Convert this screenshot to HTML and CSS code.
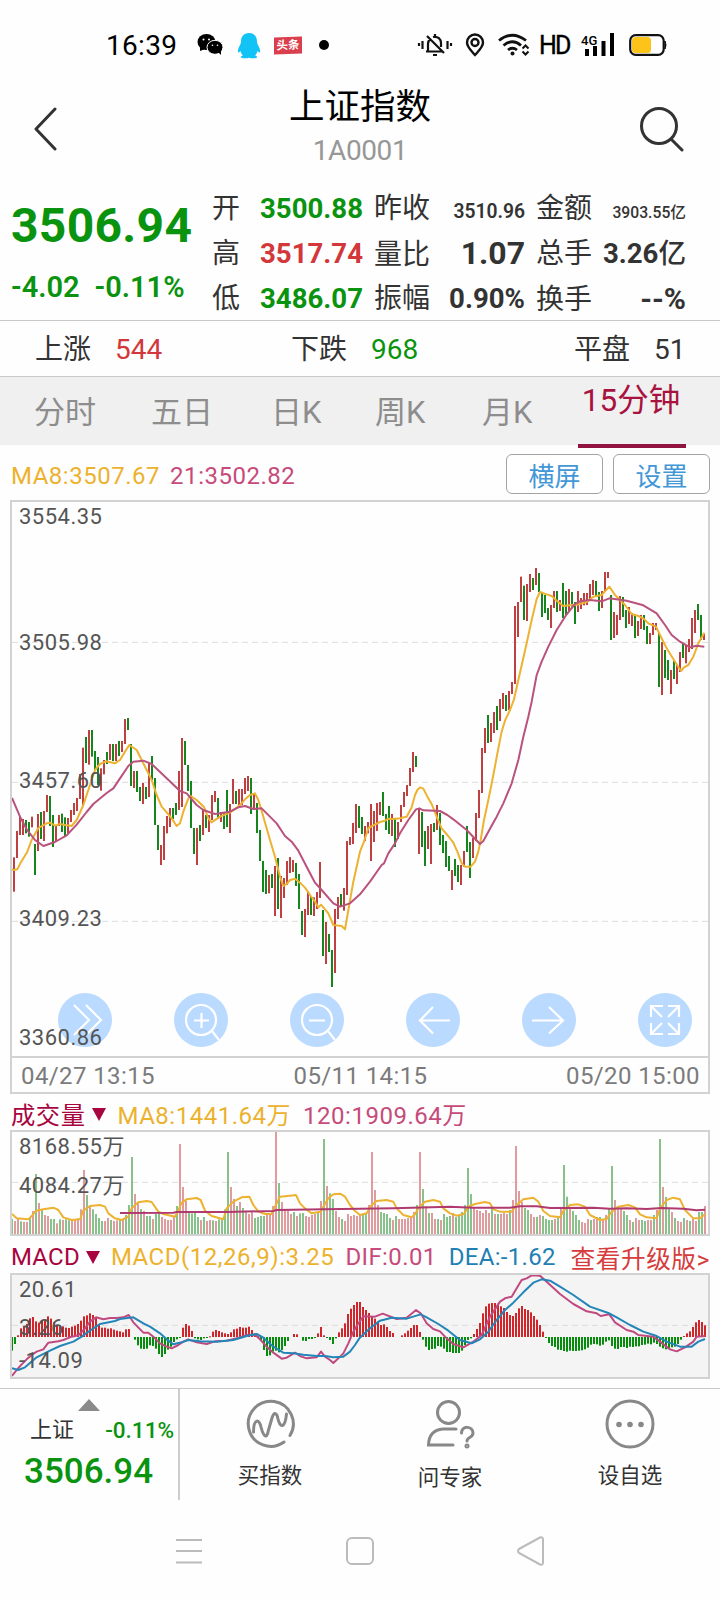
FILE: index.html
```html
<!DOCTYPE html>
<html lang="zh-CN">
<head>
<meta charset="utf-8">
<title>上证指数</title>
<link rel="stylesheet" href="styles.css">
</head>
<body>
<div class="statusbar">
  <span class="clock">16:39</span>
  <svg class="ic-wechat" width="26" height="22" viewBox="0 0 26 22"><ellipse cx="9.5" cy="8" rx="9" ry="8"/><path d="M3 13v4l5-2z"/><g stroke="#fff"><ellipse cx="18" cy="13.3" rx="8" ry="7"/></g><path d="M21 18l3 3v-4z"/><g fill="#fff"><circle cx="6.5" cy="5.5" r="1"/><circle cx="12" cy="5.5" r="1"/><circle cx="15.5" cy="11.3" r=".8"/><circle cx="20.5" cy="11.3" r=".8"/></g></svg>
  <svg class="ic-qq" width="24" height="27" viewBox="0 0 24 27"><path d="M12 1c-5 0-8 3.500-8 8.500 0 2-1 3.500-2 5.500S.5 20 1.300 20.500s2-1.500 2.200-1.500c.5 2 1.500 3.500 2.500 4.500-1.500.5-2.500 1-2 2 .5 1 6 1 8 .2 2 .8 7.500.8 8-.2.500-1-.500-1.500-2-2 1-1 2-2.500 2.500-4.500.2 0 1.400 2 2.200 1.500s.300-3.500-.7-5.500-2-3.500-2-5.500C20 4.500 17 1 12 1z" fill="#12c3f6"/></svg>
  <span class="toutiao">头条</span>
  <span class="dot"></span>
  <div class="sysicons">
    <svg width="36" height="24" viewBox="0 0 36 24" fill="none" stroke="#111" stroke-width="2.200"><path d="M9 18.500h16M11 18V11c0-2 1-4 2.500-5M16 4c5-1 8 2 8 6v4M10 3l17 17M18 1v3M16 22h4M2 10v3M5.500 8v8M30.500 8v8M34 10v3"/></svg>
    <svg class="ic-pin" width="20" height="24" viewBox="0 0 20 24" fill="none" stroke="#111" stroke-width="2.400"><path d="M10 22C6 17.500 2 14 2 9.500a8 8 0 0 1 16 0C18 14 14 17.500 10 22z"/><circle cx="10" cy="9.500" r="3.500"/></svg>
    <svg class="ic-wifi" width="32" height="24" viewBox="0 0 32 24" fill="none" stroke="#111" stroke-width="2.800"><path d="M1 7.500Q14-3 28 7.500M5.500 12.500Q14.500 5 23 12.500M10 17q4.500-3.500 9 0"/><circle cx="14.500" cy="20.500" r="2" fill="#111" stroke="none"/><path d="M24.500 15.500l3-3 3 3M24.500 18.500l3 3 3-3" stroke-width="2"/></svg>
    <span class="hd">HD</span>
    <svg class="ic-signal" width="34" height="24" viewBox="0 0 34 24"><path d="M4 16h4v7H4zM12 13h4v10h-4zM20.500 8h4v15h-4zM29 0h4v23h-4z"/><text x="0" y="12" class="net">4G</text></svg>
    <svg class="ic-batt" width="38" height="22" viewBox="0 0 38 22"><rect x="1.200" y="1.200" width="33.500" height="19.600" rx="5.500" fill="#fff" stroke="#111" stroke-width="2.200"/><rect x="3" y="3" width="19" height="16" rx="3.500" fill="#fcc419"/><path d="M36 7q2 4 0 8z" stroke="#111"/></svg>
  </div>
</div>

<header class="header">
  <svg class="back" width="24" height="44" viewBox="0 0 24 44" fill="none" stroke="#333" stroke-width="3" stroke-linecap="round" stroke-linejoin="round"><path d="M21 2L2 22l19 20"/></svg>
  <div class="titles"><h1>上证指数</h1><p>1A0001</p></div>
  <svg class="search" width="46" height="46" viewBox="0 0 46 46" fill="none" stroke="#333" stroke-width="3" stroke-linecap="round"><circle cx="20" cy="20" r="17.500"/><path d="M32 33l11 11"/></svg>
</header>

<section class="quote">
  <div class="last"><strong class="price">3506.94</strong><div class="chg"><b>-4.02</b><b>-0.11%</b></div></div>
  <dl class="stats">
    <div><dt>开</dt><dd class="g">3500.88</dd></div><div><dt>昨收</dt><dd class="s20">3510.96</dd></div><div><dt>金额</dt><dd class="s16">3903.55亿</dd></div>
    <div><dt>高</dt><dd class="r">3517.74</dd></div><div><dt>量比</dt><dd class="s32">1.07</dd></div><div><dt>总手</dt><dd>3.26<span>亿</span></dd></div>
    <div><dt>低</dt><dd class="g">3486.07</dd></div><div><dt>振幅</dt><dd>0.90%</dd></div><div><dt>换手</dt><dd class="s29">--%</dd></div>
  </dl>
</section>
<section class="breadth">
  <div>上涨<span class="r">544</span></div><div>下跌<span class="g">968</span></div><div>平盘<span>51</span></div>
</section>
<nav class="tabs"><a>分时</a><a>五日</a><a>日K</a><a>周K</a><a>月K</a><a class="on">15分钟</a></nav>

<div class="legend main-legend"><span class="y">MA8:3507.67</span><span class="p">21:3502.82</span><button>横屏</button><button>设置</button></div>

<section class="kbox">
  <div class="plot">
    <svg class="canvas" id="kline" viewBox="36 1506 2088 1662"></svg>
    <div class="tools">
      <svg viewBox="0 0 54 54"><path d="M16 12l15 15-15 15M28 12l15 15-15 15"/></svg>
      <svg viewBox="0 0 54 54"><circle cx="27" cy="27" r="15"/><path d="M38 38l7 9M20 27.500h15M27.500 20v15"/></svg>
      <svg viewBox="0 0 54 54"><circle cx="27" cy="27" r="15"/><path d="M38 38l7 9M19 27.500h16"/></svg>
      <svg viewBox="0 0 54 54"><path d="M27 14L14 27.500l13 13M14 27.500h30"/></svg>
      <svg viewBox="0 0 54 54"><path d="M27 14l14 13.500-14 13M41 27.500H10"/></svg>
      <svg viewBox="0 0 54 54"><path d="M13 24V13h12M13 13l11 11M30 13h11v11M41 13L30 24M13 30v11h12M13 41l11-11M41 30v11H30M41 41L30 30"/></svg>
    </div>
    <span class="lb k1">3554.35</span><span class="lb k2">3505.98</span><span class="lb k3">3457.60</span><span class="lb k4">3409.23</span><span class="lb k5">3360.86</span>
  </div>
  <div class="dates"><span>04/27 13:15</span><span>05/11 14:15</span><span>05/20 15:00</span></div>
</section>

<div class="legend vol-legend"><span class="m">成交量</span><i class="tri"></i><span class="y">MA8:1441.64万</span><span class="p">120:1909.64万</span></div>
<section class="sub"><svg class="canvas" id="vol" viewBox="36 3396 2088 306"></svg><span class="lb v1">8168.55万</span><span class="lb v2">4084.27万</span></section>

<div class="legend macd-legend"><span class="m">MACD</span><i class="tri"></i><span class="y">MACD(12,26,9):3.25</span><span class="p">DIF:0.01</span><span class="b">DEA:-1.62</span><a class="up">查看升级版&gt;</a></div>
<section class="sub grey"><svg class="canvas" id="macd" viewBox="36 3825 2088 306"></svg><span class="lb m1">20.61</span><span class="lb m2">3.26</span><span class="lb m3">-14.09</span></section>

<footer class="bottom">
  <div class="idx"><i class="caret"></i><div class="row"><span>上证</span><b>-0.11%</b></div><strong>3506.94</strong></div>
  <div class="act"><svg width="50" height="50" viewBox="0 0 50 50"><path d="M45 36.500A22.500 22.500 0 1 0 39 43"/><path d="M8.500 33c0-13 5.500-14 7.500-5 2 8 5.500 14 7.500 3L27 19c2-7 5-5 6 1 2 9 7 10 8.500-5"/></svg><span>买指数</span></div>
  <div class="act low"><svg width="50" height="50" viewBox="0 0 50 50"><circle cx="23.500" cy="13.500" r="11"/><path d="M31 30H18Q4 31 3.500 46H28M36.500 34c0-8 11.500-7 11.500 0 0 5-6 4-6 8"/><circle cx="42" cy="47" r="1"/></svg><span>问专家</span></div>
  <div class="act"><svg width="50" height="50" viewBox="0 0 50 50"><circle cx="25" cy="25" r="23"/><g class="fill"><circle cx="14" cy="25.500" r="2.800"/><circle cx="25" cy="25.500" r="2.800"/><circle cx="36" cy="25.500" r="2.800"/></g></svg><span>设自选</span></div>
</footer>
<div class="sysnav">
  <svg width="28" height="28" viewBox="0 0 28 28"><path d="M1 3h26M1 14h26M1 25.500h26"/></svg>
  <svg width="28" height="28" viewBox="0 0 28 28"><rect x="1" y="1" width="26" height="26" rx="5"/></svg>
  <svg width="30" height="32" viewBox="0 0 30 32"><path d="M3 14L24 2.500q3-1 3 2v23q0 3-3 2L3 18q-2-2 0-4z"/></svg>
</div>
<script src="charts.js"></script>
</body>
</html>
```
FILE: styles.css
```css
* { box-sizing: border-box; }
body { margin: 0; width: 720px; height: 1600px; overflow: hidden; background: #fefefe; color: #333; font-family: Roboto, "Noto Sans CJK SC", sans-serif; }
h1, p, dl, dd, dt { margin: 0; font-weight: 400; }
svg { display: block; flex: none; }
.g { color: #0a930e; }
.r { color: #d2383b; }
.y { color: #ecb22e; }
.p { color: #c64b7a; }
.m { color: #a8043f; }
.b { color: #2080b4; }

.statusbar { height: 88px; padding: 2px 0 0 106px; display: flex; align-items: center; color: #000; }
.clock { width: 92px; font-size: 28px; letter-spacing: .3px; }
.ic-wechat { margin-left: -1px; }
.ic-qq { margin-left: 14px; }
.toutiao { margin-left: 13px; width: 28px; height: 17px; background: #da3f4d; color: #fff; font-size: 11.500px; font-weight: 700; line-height: 17px; text-align: center; transform: skewY(-2deg); }
.dot { margin-left: 17px; width: 10px; height: 10px; border-radius: 50%; background: #000; }
.sysicons { margin-left: 88px; display: flex; align-items: center; }
.ic-pin { margin-left: 12px; }
.ic-wifi { margin-left: 13px; }
.hd { margin-left: 9px; width: 42px; font-size: 25px; letter-spacing: -1.800px; -webkit-text-stroke: .4px #000; }
.net { font-size: 13px; font-weight: 500; }
.ic-batt { margin-left: 14px; }

.header { height: 92px; display: flex; align-items: flex-start; }
.back { margin: 19px 0 0 34px; }
.titles { flex: 1; text-align: center; padding: 1px 0 0 23px; }
h1 { font-size: 35.500px; line-height: 36px; color: #000; }
.titles p { margin-top: 8px; font-size: 28px; line-height: 36px; color: #979797; letter-spacing: -.4px; }
.search { margin: 18px 35px 0 0; }

.quote { height: 141px; display: flex; border-bottom: 1px solid #c9c9c9; }
.last { width: 212px; padding: 18px 0 0 11px; color: #0a930e; }
.price { display: block; font-size: 48px; line-height: 56px; letter-spacing: .3px; }
.chg { display: flex; gap: 15px; margin-top: 16px; font-size: 29px; line-height: 34px; }
.chg b { font-weight: 600; }
.stats { display: grid; grid-template-columns: 151px 151px 150px; grid-auto-rows: 45px; column-gap: 11px; padding-top: 6px; height: 140px; }
.stats div { display: flex; justify-content: space-between; align-items: baseline; line-height: 45px; }
.stats dt { font-size: 28px; }
.stats dd { font-size: 27.600px; font-weight: 700; }
.stats dd span { font-weight: 500; }
.stats .s20 { font-size: 19.300px; font-weight: 600; }
.stats .s16 { font-size: 15.700px; font-weight: 500; }
.stats .s32 { font-size: 32px; }
.stats .s29 { font-size: 30px; }

.breadth { height: 56px; padding: 1px 34px 0 35px; display: grid; grid-template-columns: 256px 283px 1fr; border-bottom: 1px solid #c9c9c9; font-size: 28px; line-height: 55px; }
.breadth span { margin-left: 24px; }
.tabs { height: 68px; padding-left: 34px; background: #f0f0f0; color: #8d8d8d; font-size: 31px; line-height: 71px; display: grid; grid-template-columns: 117px 120px 104px 107px 96px 108px; }
.tabs .on { color: #a8123f; border-bottom: 4px solid #911440; font-size: 31.500px; line-height: 48px; text-align: center; padding-right: 2px; }

.legend { display: flex; align-items: center; padding: 0 10px 0 11px; font-size: 24px; letter-spacing: .52px; white-space: nowrap; }
.main-legend { height: 55px; gap: 10px; padding-top: 6px; }
.main-legend .y { flex: none; }
.main-legend .p { flex: 1; }
.legend button { width: 97px; height: 40px; margin-top: -3px; padding: 0; border: 1px solid #a3a3a3; border-radius: 6px; background: #fff; color: #4397d7; font: 26px "Noto Sans CJK SC", sans-serif; line-height: 37px; }
.kbox { margin: 0 10px; height: 594px; border: 2px solid #d2d2d2; }
.plot { position: relative; height: 556px; border-bottom: 2px solid #d2d2d2; }
.canvas { width: 696px; height: 100%; }
.plot .canvas { height: 554px; }
.lb { position: absolute; left: 7px; font-size: 22px; line-height: 26px; letter-spacing: .5px; color: #555; }
.k1 { top: 2px; } .k2 { top: 128px; } .k3 { top: 266px; } .k4 { top: 404px; } .k5 { top: 523px; }
.tools { position: absolute; left: 46px; top: 491px; display: flex; gap: 62px; }
.tools svg { width: 54px; height: 54px; border-radius: 50%; background: #badaff; fill: none; stroke: #fff; stroke-width: 2.200; }
.dates { height: 34px; padding: 2px 8px 0 9px; display: flex; justify-content: space-between; align-items: center; font-size: 24px; letter-spacing: .4px; color: #7b7b7b; }
.tri { border: 7px solid transparent; border-top: 13px solid #a8043f; border-bottom: 0; }
.vol-legend { height: 36px; padding-top: 3px; }
.vol-legend .m { font-size: 24.300px; }
.vol-legend .tri { margin: 2px 11px 0 7px; }
.vol-legend .p { margin-left: 12px; }
.macd-legend { height: 37px; padding-top: 5px; }
.macd-legend .m { letter-spacing: .2px; }
.macd-legend .tri { margin: 0 11px 0 6px; }
.macd-legend .p { margin-left: 11px; letter-spacing: .4px; }
.macd-legend .b { margin-left: 12px; letter-spacing: .3px; }
.macd-legend .up { margin-left: auto; color: #d63c3c; font-size: 24.700px; }
.sub { position: relative; margin: 0 10px; height: 106px; border: 2px solid #d2d2d2; }
.grey { background: #f4f4f4; }
.v1 { top: 2px; } .v2 { top: 41px; }
.m1 { top: 2px; } .m2 { top: 40px; } .m3 { top: 73px; }
.grid { stroke: #dcdcdc; stroke-width: 3; stroke-dasharray: 18 12; fill: none; }
.line { fill: none; stroke-width: 6; stroke-linejoin: round; }

.bottom { margin-top: 9px; height: 112px; border-top: 1px solid #c9c9c9; display: flex; }
.idx { width: 180px; border-right: 2px solid #cdcdcd; color: #0a930e; }
.caret { display: block; width: 0; margin: 10px 0 0 78px; border: 11.500px solid transparent; border-bottom: 12px solid #8a8a8a; border-top: 0; }
.row { display: flex; justify-content: space-between; padding: 0 4px 0 30px; margin-top: 4px; font-size: 22px; line-height: 30px; }
.row span { color: #333; }
.row b { font-weight: 500; font-size: 22.500px; }
.idx strong { display: block; margin: 5px 0 0 24px; font-size: 35px; font-weight: 500; line-height: 44px; }
.act { flex: 1; display: flex; flex-direction: column; align-items: center; padding-top: 10px; }
.act svg { fill: none; stroke: #888; stroke-width: 3; stroke-linecap: round; }
.act .fill { fill: #888; stroke: none; }
.act span { margin-top: 12px; font-size: 21.500px; line-height: 30px; }
.act.low span { margin-top: 14px; }
.sysnav { height: 100px; padding: 2px 174px 0 175px; display: flex; justify-content: space-between; align-items: center; }
.sysnav svg { fill: none; stroke: #bbb; stroke-width: 2; }
```
FILE: charts.js
```js
const RED = '#bf4040', GREEN = '#15851d';
const rect = (x, y, w, h, c) => `<rect x="${x}" y="${y}" width="${w}" height="${h}" fill="${c}"/>`;
const grid = y => `<path class="grid" d="M36 ${y}H2124"/>`;
// Each part is [x offset, y offset, "x,y x,y ..."]
const line = (parts, color) => {
  const pts = parts.flatMap(([dx, dy, s]) => s.split(' ').map(p => {
    const [x, y] = p.split(',').map(Number);
    return (x + dx) + ',' + (y + dy);
  }));
  return `<polyline class="line" stroke="${color}" points="${pts.join(' ')}"/>`;
};

// 15-minute bars: direction, high, low
const sessions = [
  [42, 2100, 'r472-575 r393-474 r350-405 r357-405 g360-400 g366-410 r350-382 g432-525 r342-453 g336-417 r333-423 r285-336 g288-378 g345-441 r375-425 r345-378 g341-396 g352-408 r354-400 r330-366 r309-345 r294-333 r222-297 r143-315 g111-189 r90-194 g90-170 g153-210 g171-255 r205-272 r180-223 g156-192 r132-180 g132-183 r132-183 g123-168 r123-156 r57-132 g54-90 g132-258 r213-264 g213-276 g261-303 r249-312 g261-297 r189-291 g168-240 g234-375 g375-450 r435-495 r378-480 r348-400 r324-381 g324-357 g309-345 r213-330 r114-321 g123-195 g195-273 g243-384 g384-462 r384-495 g375-423 r330-405 g345-384 r345-396 r285-360 r273-306 g294-357 r336-366 g336-387 g270-381 r312-399 r237-312 g273-312 r267-315 r267-315 r234-282 r228-273 g234-342 r279-330 g309-399 g390-483 g483-576 g510-582 r525-580 g522-564 r498-648 g474-627 r528-654 r534-594 r483-555 r471-519 r480-516 g489-558 g522-627 g633-705 r627-711 r573-645 g588-645 r592-648 r576-627 r486-594 g630-768 r666-792 g702-756 g750-861 r627-819 r591-657 g582-620 r564-632 r423-585 r411-435 r369-432 r312-399 g318-384'],
  [1086, 2100, 'g351-402 r378-423 r366-400 r312-483 r333-426 r309-393 r306-345 g276-348 g342-390 g318-402 r342-408 g357-441 r366-417 r315-366 r276-321 r255-288 r204-258 r156-216 g168-201 r327-462 g336-441 g393-498 r378-447 r372-492 g369-396 r315-390 g339-435 g405-459 g423-501 g468-513 r510-570 g477-528 g495-546 r495-555 r453-500 g378-456 g426-534 r414-474 r339-423 r270-354 r144-279 r84-159 g45-129 r69-126 r36-99 g18-90'],
  [1500, 1350, 'r747-813 r729-777 g735-783 r723-780 r696-732 r468-702 r456-561 r380-456 g407-510 r402-513 r372-426 g384-420 r354-405 g369-426 g426-501 g435-489 g474-510 r465-534 r423-474 g423-486 r450-483 g399-504 g423-495 r417-486 g426-470 g456-522 r423-486 r444-477 r429-466 r429-465 r402-447 r390-435 g393-438 g426-483 r423-474 r366-423 r366-384 g435-570 r486-564 r495-555 r438-510 g441-501 g480-534 r471-522 r489-528 g495-564 r513-558 r495-537 g495-540 g528-582 r549-582 r519-555 r519-540 g549-711 r576-735 g600-684 g630-690 r660-732 g633-687 r645-702 r606-666 g582-624 r585-640 r567-606 r504-597 r480-549 g462-510 g495-570 r549-570']
];
let k = grid(1927) + grid(2347) + grid(2764);
for (const [x0, y0, s] of sessions)
  s.split(' ').forEach((b, i) => {
    const [hi, lo] = b.slice(1).split('-').map(Number);
    k += rect(x0 + i * 9 - 3, y0 + hi, 6, lo - hi, b[0] === 'r' ? RED : GREEN);
  });
k += line([
  [0, 2100, '33,507 42,510 52,508 62,488 82,455 95,420 115,384 140,370 150,368 165,377 180,372 195,375 215,378 230,360 250,315 265,270 285,210 300,192 318,184 345,190 360,180 375,155 388,135 410,150 425,180 440,210 455,240 470,285 485,320 500,337 515,355 530,378 540,370 550,335 565,295 572,288 590,300 612,321 625,355 635,367 660,350 690,338 720,315 735,298 750,285 765,280 775,300 790,350 810,420 825,470 840,530 850,558 860,552 870,540 885,536 900,548 915,563 930,585 945,605 955,622 963,614 985,640 1000,675 1025,678 1035,688 1045,630 1060,545 1080,455'],
  [1080, 2100, '12,425 25,384 40,376 60,366 75,362 85,356 100,357 120,355 140,350 155,322 165,285 172,270 180,262 190,266 202,290 215,312 232,355 245,385 262,405 280,428 292,455 305,490 315,500 332,500 345,485 355,455 362,420 372,360 385,300 400,225 415,145 425,95 435,62 450,30 462,-2'],
  [1080, 1350, '475,690 483,655 500,580 515,510 530,447 540,426 560,433 575,438 590,452 610,468 635,465 650,464 680,456 700,440 725,435 748,410 765,435 780,450 795,465 815,492 835,498 850,505 865,520 888,530 900,555 920,595 945,635 963,663 972,652 985,645 1000,620 1015,580 1033,548']
], '#ecb230');
k += line([
  [0, 2100, '36,294 60,350 80,388 105,420 130,438 165,426 200,406 230,374 260,336 280,312 320,279 340,265 360,235 385,198 400,185 430,182 455,192 500,235 540,273 560,280 590,315 610,330 645,342 690,335 715,322 735,318 760,327 785,325 830,370 855,408 875,425 895,452 925,510 945,548 965,570 1000,610 1020,620 1050,610 1080,583'],
  [1080, 2100, '30,545 65,495 72,490 85,460 105,430 120,400 145,360 168,328 178,325 190,331 240,333 262,345 280,358 320,390 360,432 370,423 390,386 410,350 430,310 455,250 475,180 490,110 505,50 515,5'],
  [1080, 1350, '530,675 545,635 565,590 590,540 620,493 645,462 660,454 690,450 725,454 748,445 800,452 850,466 890,490 915,525 935,555 960,575 990,592 1010,587 1033,590']
], '#b9527c');
document.getElementById('kline').innerHTML = k;

// Volume: bar tops, then bar directions
const vol = [
  [[417,423,417,424,426,426,414,393], 'grrgrrgr'],
  [[282,369,387,405,408,417,417,430,418,420,418,421,423,420,415,388], 'grgrrggrgrggrrrr'],
  [[270,345,378,388,402,414,423,423,414,420,423,421,418,418,405,375], 'rgrggggrrgrrgrgg'],
  [[231,342,366,387,393,408,408,417,402,396,411,417,420,420,411,378], 'grrgrggrggrrrrrg'],
  [[192,321,363,399,400,399,411,420,411,423,420,421,423,418,418,388], 'rrrggggrgrrgrggg'],
  [[216,321,357,378,366,384,393,402,393,414,411,408,408,402,402,378], 'grrgrgrrrggggrrr'],
  [[153,309,366,390,388,402,396,408,400,399,408,411,405,402,396,363], 'rgrrrrgrggrrrrgr'],
  [[177,318,340,357,393,411,417,423,402,408,405,408,405,405,399,375], 'grggrrgrrrrrrggr'],
  [[216,330,375,396,399,402,414,420,408,417,417,417,414,411,396,375], 'rrrggggrgrrrrrrg'],
  [[216,327,378,399,399,417,417,420,402,411,408,399,411,405,396,375], 'rgrgrrgrgggrgggg'],
  [[264,342,384,390,393,399,390,399,384,402,402,402,399,402,390,360], 'ggrrrrrrgrgrrrgr'],
  [[198,333,366,384,390,402,411,411,405,408,417,420,420,417,411,387], 'rrrggrrgrggggrgr'],
  [[255,350,384,393,405,420,426,429,417,420,417,411,411,420,405,384], 'ggrgggrrrgrrgrrg'],
  [[258,360,384,387,393,405,420,426,414,420,420,423,420,420,405,390], 'grrrggrgrrggrrgr'],
  [[177,321,351,387,396,414,423,426,414,420,423,417,423,396,396,378], 'grggrgrrgrgrrggr']
];
let v = grid(3547), x = 36;
for (const [tops, dirs] of vol)
  tops.forEach((t, i) => { v += rect(x - 3, 3240 + t, 6, 462 - t, dirs[i] === 'r' ? '#df9c9f' : '#88c28b'); x += 9; });
v += line([
  [0, 3240, '36,402 50,415 85,418 98,405 108,392 130,388 160,383 175,390 190,412 215,420 240,418 250,392 270,378 300,375 315,380 325,400 345,415 365,420 385,410 395,385 415,367 440,363 455,366 475,395 490,402 525,410 533,395 545,368 560,358 590,354 602,360 615,392 635,408 670,418 680,385 700,365 725,352 748,350 760,375 775,395 795,402 815,402 825,380 840,350 870,347 888,345 900,370 915,385 935,400 962,395 970,380 985,355 1000,343 1020,341 1035,350 1050,375 1065,393 1080,405'],
  [1080, 3240, '20,400 35,375 50,363 80,360 100,365 110,385 130,405 155,412 165,403 175,385 195,365 220,360 240,365 250,385 270,400 290,407 312,402 325,380 345,372 375,366 390,370 400,388 420,395 455,395 470,375 490,358 520,353 535,365 550,393 570,408 600,412 612,390 630,375 655,373 675,380 690,405 720,420 740,417 755,395 775,380 805,375 825,382 840,403 860,412 890,415 900,385 920,360 940,353 960,358 975,390 1000,415 1020,415 1035,403']
], '#ecb230');
v += line([
  [0, 3240, '360,399 520,398 530,396 680,396 820,393 830,390 970,388 1080,386'],
  [1080, 3240, '100,385 270,380 340,383 450,383 480,379 530,379 570,384 700,383 750,386 800,385 860,387 905,384 970,386 1010,391 1035,389']
], '#b03a70');
document.getElementById('vol').innerHTML = v;

// MACD histogram tips around the zero line
const zero = 771;
const hist = [812,792,766,745,738,732,715,711,724,728,722,722,709,716,726,735,737,739,743,744,740,737,732,722,709,706,700,705,714,733,743,743,746,745,749,752,754,757,748,747,771,779,796,806,807,806,796,798,806,822,831,822,809,800,786,778,772,743,732,737,753,775,778,780,775,773,769,755,750,753,757,760,762,757,748,746,741,743,743,740,750,760,768,783,810,828,826,815,812,817,810,798,783,771,762,763,771,782,783,777,777,774,760,741,766,773,780,792,775,757,745,730,702,686,675,666,
666,681,690,699,708,716,724,735,733,741,753,759,771,771,766,760,752,744,735,735,756,779,800,810,807,806,798,800,806,816,816,819,819,819,812,795,780,775,762,747,729,700,679,671,669,669,671,679,684,696,705,708,699,685,678,687,690,697,708,719,735,755,774,789,798,801,809,810,813,815,812,813,813,812,811,808,803,794,792,793,797,794,785,781,798,806,807,801,801,804,800,801,799,799,795,794,791,793,788,792,800,805,808,806,802,800,792,779,768,760,754,741,727,720,726,736];
let m = grid(3976);
hist.forEach((t, i) => {
  if (t !== zero) m += rect(36 + i * 9 - 3, 3240 + Math.min(t, zero), 6, Math.max(3, Math.abs(t - zero)), t < zero ? '#cf262c' : '#078c0e');
});
m += line([
  [0, 3240, '36,888 50,870 65,853 80,838 95,825 110,815 130,808 145,788 175,784 190,780 215,770 235,766 255,745 270,725 288,712 310,718 330,714 350,714 370,712 386,705 400,727 430,758 445,758 460,770 480,790 500,800 515,805 535,795 550,785 565,778 590,787 620,792 645,784 680,782 710,775 740,765 765,764 780,778 800,800 820,818 845,836 860,833 885,818 900,828 920,835 950,832 963,815 975,830 990,840 1000,849 1015,835 1030,820 1045,790 1060,755 1075,730'],
  [1080, 3240, '10,709 45,710 68,701 110,717 140,713 168,690 182,700 200,730 220,747 240,754 260,775 280,792 310,802 340,785 365,765 390,710 420,665 435,655 455,650 470,625 485,600 500,595 515,586 540,587 560,605 600,642 640,672 680,694 710,700 722,708 748,703 765,727 800,750 820,755 835,765 880,770 900,785 930,808 950,814 975,802 1000,785 1010,770 1035,768']
], '#c04a80');
m += line([
  [0, 3240, '36,865 55,870 75,862 110,832 150,812 180,798 220,785 245,770 270,752 300,732 345,723 360,717 400,712 430,730 450,740 480,760 500,778 520,793 545,787 565,780 600,784 650,785 700,780 740,768 770,762 790,773 820,800 850,818 880,820 910,824 950,828 975,828 1000,832 1030,830 1050,815 1065,795 1078,775'],
  [1080, 3240, '30,745 60,722 95,713 140,716 182,703 200,712 235,732 265,752 300,780 335,790 360,778 385,755 410,720 435,690 460,668 490,637 520,608 545,598 570,602 600,620 640,645 690,680 745,699 770,712 810,735 850,755 890,768 920,785 960,800 995,800 1015,785 1035,777']
], '#2385b8');
document.getElementById('macd').innerHTML = m;
```
